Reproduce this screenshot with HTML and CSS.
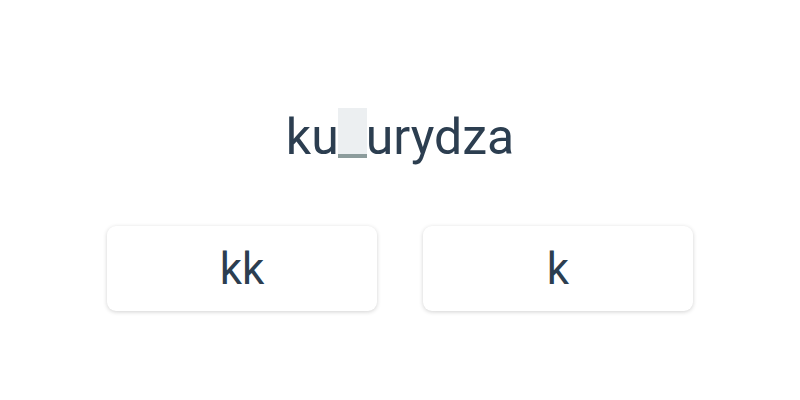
FILE: index.html
```html
<!DOCTYPE html>
<html lang="pl">
<head>
<meta charset="utf-8">
<link rel="stylesheet" href="styles.css">
</head>
<body>
<main class="quiz">
  <div class="word">ku<span class="gap">&nbsp;</span>urydza</div>
  <div class="options">
    <button class="option">kk</button>
    <button class="option">k</button>
  </div>
</main>
</body>
</html>
```
FILE: styles.css
```css
html, body {
  margin: 0;
  padding: 0;
  background: #ffffff;
}
body {
  font-family: Roboto, "Liberation Sans", sans-serif;
  color: #2c3e50;
  width: 800px;
  height: 400px;
}
.quiz {
  display: flex;
  flex-direction: column;
  align-items: center;
  padding-top: 108px;
}
.word {
  font-size: 50px;
  line-height: 58px;
  height: 58px;
  display: flex;
  align-items: flex-start;
}
.gap {
  display: inline-block;
  width: 29px;
  height: 50px;
  margin-left: -1px;
  margin-right: -1px;
  background: #eceff1;
  border-bottom: 4px solid #8c9c9c;
  box-sizing: border-box;
}
.options {
  display: flex;
  gap: 46px;
  margin-top: 60px;
}
.option {
  width: 270px;
  height: 85px;
  background: #fff;
  border: none;
  border-radius: 9px;
  box-shadow: 0 1px 4px rgba(0, 0, 0, 0.18);
  font-family: Roboto, "Liberation Sans", sans-serif;
  font-size: 44px;
  color: #2c3e50;
  padding: 0;
}
```
